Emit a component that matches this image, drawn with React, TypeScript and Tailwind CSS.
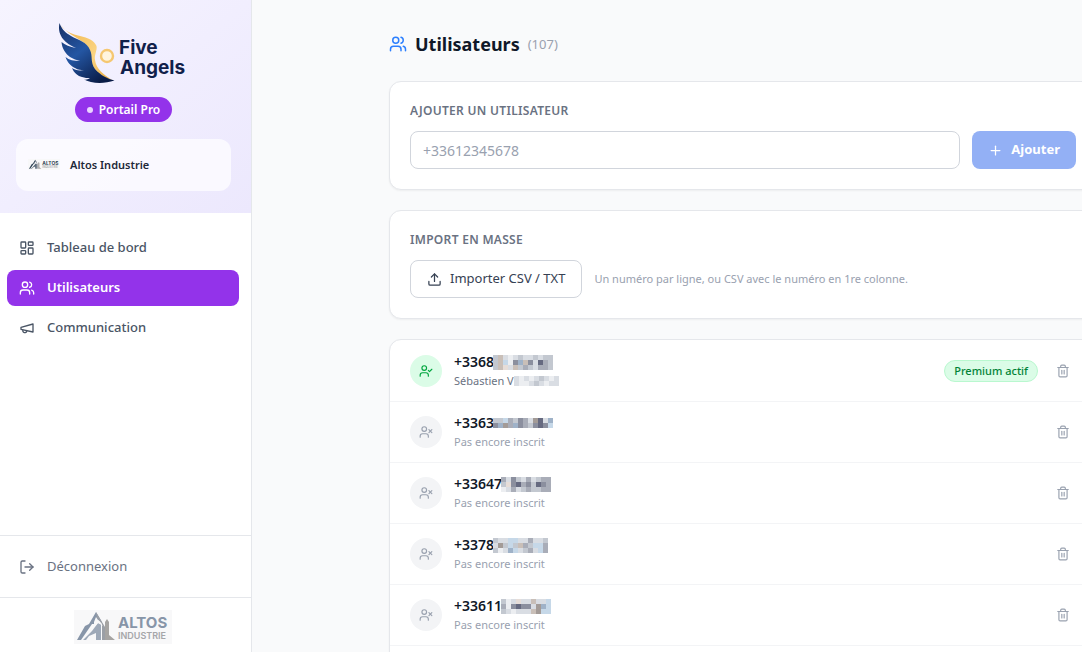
import { useState } from "react";
import { LayoutDashboard, LogOut, Plus, Trash2, Upload, UserCheck, Users, UserX } from "lucide-react";
import { clsx } from "clsx";

type Member = {
    phone: string;
    phoneMask: string[];
    name?: string;
    nameMask?: string[];
};

// each letter of a mask is one 5px tile, "." is left empty
const tiles: Record<string, string> = {
    a: "#eceef1",
    b: "#d9dde3",
    c: "#c3c8d0",
    d: "#a9adb8",
    e: "#8b8f9e",
    f: "#666a80",
    g: "#c9bfb8",
    h: "#a39b97",
    i: "#c6d8e8",
    j: "#9fb2c8",
    k: "#e6ddd8",
};

const members: Member[] = [
    {
        phone: "+3368",
        phoneMask: ["cgbabcbbcbcc", "cgiaejgebfdc", "cgkbgcdcbddc"],
        name: "Sébastien V",
        nameMask: ["bababcbab", "baabcbabb"],
    },
    { phone: "+3363", phoneMask: ["ccidcedbhfbj", "ejhdjedcefei"] },
    { phone: "+33647", phoneMask: ["dbecbdbcdd", "ckefdecfed", "abdbcdccdd"] },
    { phone: "+3378", phoneMask: ["cbbiibbdbbc", "bhcicgdciid", "cabjibcdbid"] },
    { phone: "+33611", phoneMask: ["cabkbbgbbi", "daefeebhji", "cbabbbghii"] },
];

const navItems = [
    { id: "dashboard", label: "Tableau de bord", icon: LayoutDashboard },
    { id: "users", label: "Utilisateurs", icon: Users },
    { id: "communication", label: "Communication", icon: Megaphone },
];

function Megaphone({ size = 24 }: { size?: number | string }) {
    return (
        <svg width={size} height={size} viewBox="0 0 24 24" fill="none" stroke="currentColor" strokeWidth="2" strokeLinecap="round" strokeLinejoin="round">
            <path d="m3 11 18-5v12L3 14v-3z" />
            <path d="M11.6 16.8a3 3 0 1 1-5.8-1.6" />
        </svg>
    );
}

function Mask({ rows, className }: { rows: string[]; className?: string }) {
    const w = rows[0].length * 5;
    const h = rows.length * 5;
    return (
        <svg width={w} height={h} viewBox={`0 0 ${w} ${h}`} shapeRendering="crispEdges" className={clsx("shrink-0", className)} aria-hidden="true">
            {rows.map((row, y) =>
                row.split("").map((t, x) => tiles[t] && <rect key={`${x}-${y}`} x={x * 5} y={y * 5} width="5" height="5" fill={tiles[t]} />)
            )}
        </svg>
    );
}

function BrandLogo() {
    return (
        <svg width="132" height="62" viewBox="0 0 132 62" role="img" aria-label="Five Angels">
            <defs>
                <linearGradient id="wing" x1="0" y1="0" x2="0.7" y2="1">
                    <stop offset="0" stopColor="#152f66" />
                    <stop offset="0.5" stopColor="#2456a3" />
                    <stop offset="1" stopColor="#0a1c47" />
                </linearGradient>
                <linearGradient id="gold" x1="0" y1="0" x2="1" y2="1">
                    <stop offset="0" stopColor="#efb548" />
                    <stop offset="0.6" stopColor="#fbd483" />
                    <stop offset="1" stopColor="#e5a63a" />
                </linearGradient>
            </defs>
            <path d="M2.5 3C8 10 14 12 22 14C30 16 36 18 38.5 24C39.5 28 36 33 37 38C38 47 46 53 54 58C45 56 36 49 33 40C31 33 33 30 30 25C26 18 14 16 2.5 3Z" fill="url(#gold)" />
            <path
                d="M1.5 1C0 8 2 13 5 17C8 21 13 24 18 26C12 25 7 23 3.5 20C4 27 8 32 12 35C15 37 19 38 22 39C16 39 11 38 7.5 35C9 40 13 44 17 46C20 48 23 48 26 48C21 49 17 48 14 46C16 51 20 54 24 55C27 56 29 56 32 56C29 58 27 58 25 57C34 62 46 62 56.5 58.5C50 57 42 53 37 47C32 40 35 34 32 28C29 20 20 18 13 14C8 11 4 8 1.5 1Z"
                fill="url(#wing)"
            />
            <circle cx="49" cy="34" r="6" fill="#fff5df" stroke="#f5c771" strokeWidth="2.4" />
            <g fill="#10204a" fontFamily="Inter, sans-serif" fontWeight="700" fontSize="19">
                <text x="61" y="32">Five</text>
                <text x="62" y="52">Angels</text>
            </g>
        </svg>
    );
}

function AltosMark({ className }: { className?: string }) {
    return (
        <svg viewBox="0 0 98 34" className={className} role="img" aria-label="Altos Industrie">
            <rect width="98" height="34" fill="#f8f8f9" />
            <path d="M3 30L11 16L15 14L22 2L28 12L24 10L21 14L18 14L7 30Z" fill="currentColor" />
            <path d="M9 30L18 21L24 13L27 14V30H22V23L15 26L12 30Z" fill="currentColor" opacity="0.8" />
            <path d="M22 2L31 17V30H28V14L23 8Z" fill="#9b9fa6" />
            <path d="M33 9L35 12V25L41 30H31V12Z" fill="#a6a4a2" />
            <path d="M20 12L22 7L24 10L29 16L24 13L20 17Z" fill="#f8f8f9" />
            <g fontFamily="Inter, sans-serif">
                <text x="44" y="18" fontSize="15" fontWeight="700" fill="currentColor">ALTOS</text>
                <text x="44" y="29" fontSize="9" fontWeight="600" fill="#a5a6a9">INDUSTRIE</text>
            </g>
        </svg>
    );
}

function Sidebar() {
    const [active, setActive] = useState("users");

    return (
        <aside className="flex w-[252px] shrink-0 flex-col border-r border-gray-200 bg-white">
            <div className="flex flex-col items-center bg-linear-to-br from-[#f6f4ff] to-[#ece8fd] pt-[22px] pr-5 pb-[22px] pl-4">
                <BrandLogo />
                <span className="mt-[13px] flex h-[25px] items-center gap-1.5 rounded-full bg-[#9333ea] px-3 text-xs font-semibold text-white">
                    <span className="size-1.5 rounded-full bg-purple-200" />
                    Portail Pro
                </span>
                <div className="mt-[17px] flex h-[52px] w-full items-center gap-2.5 rounded-xl bg-white/70 px-3">
                    <AltosMark className="w-8 text-[#2f4455]" />
                    <span className="text-[11px] font-semibold text-gray-800">Altos Industrie</span>
                </div>
            </div>

            <nav className="flex flex-1 flex-col gap-1 pt-[17px] pr-3 pl-[7px]">
                {navItems.map((item) => (
                    <button
                        key={item.id}
                        onClick={() => setActive(item.id)}
                        className={clsx(
                            "flex h-9 items-center gap-3 rounded-lg px-3 text-[13px]",
                            active === item.id ? "bg-[#9333ea] font-semibold text-white" : "font-medium text-gray-600"
                        )}
                    >
                        <item.icon size={16} />
                        {item.label}
                    </button>
                ))}
            </nav>

            <div className="border-t border-gray-200 py-3 pr-3 pl-[7px]">
                <button className="flex h-[37px] items-center gap-3 px-3 text-[13px] text-gray-500">
                    <LogOut size={16} />
                    Déconnexion
                </button>
            </div>
            <div className="flex h-[55px] justify-center border-t border-gray-200 pt-3 pr-1.5">
                <AltosMark className="h-[34px] text-[#8795a8]" />
            </div>
        </aside>
    );
}

function MemberRow({ member }: { member: Member }) {
    const registered = Boolean(member.name);

    return (
        <li className="flex h-[61px] items-center gap-3 border-b border-gray-100 px-5">
            <span
                className={clsx(
                    "flex size-8 shrink-0 items-center justify-center rounded-full",
                    registered ? "bg-green-100 text-green-600" : "bg-gray-100 text-gray-400"
                )}
            >
                {registered ? <UserCheck size={14} /> : <UserX size={14} />}
            </span>
            <div className="flex-1">
                <p className="flex items-center text-sm leading-5 font-semibold text-gray-900">
                    {member.phone}
                    <Mask rows={member.phoneMask} className="-ml-px" />
                </p>
                <p className={clsx("flex items-center text-[11px] leading-[18px]", registered ? "text-gray-500" : "text-gray-400")}>
                    {member.name ?? "Pas encore inscrit"}
                    {member.nameMask && <Mask rows={member.nameMask} />}
                </p>
            </div>
            {registered && (
                <span className="rounded-full border border-green-200 bg-green-100 px-[9px] text-[11px] leading-5 font-medium text-green-700">
                    Premium actif
                </span>
            )}
            <button aria-label="Supprimer" className="p-1.5 text-gray-400">
                <Trash2 size={14} />
            </button>
        </li>
    );
}

export default function App() {
    const [phone, setPhone] = useState("");

    return (
        <div className="flex h-screen overflow-hidden bg-gray-50 font-['Noto_Sans',sans-serif]">
            <Sidebar />
            <main className="min-w-0 flex-1 overflow-hidden">
                <div className="-mr-[15px] ml-[137px] pt-7">
                    <h1 className="mb-[21px] flex items-center gap-2 text-lg leading-8 font-bold text-gray-900">
                        <Users size={18} className="text-blue-500" />
                        Utilisateurs
                        <span className="text-[13px] font-normal text-gray-400">(107)</span>
                    </h1>

                    <div className="flex flex-col gap-5">
                        <section className="rounded-xl border border-gray-200 bg-white p-5 shadow-xs">
                            <label htmlFor="phone" className="mb-3 block text-xs leading-[17px] font-semibold tracking-wide text-gray-500 uppercase">
                                Ajouter un utilisateur
                            </label>
                            <div className="flex gap-3">
                                <input
                                    id="phone"
                                    type="tel"
                                    value={phone}
                                    onChange={(e) => setPhone(e.target.value)}
                                    placeholder="+33612345678"
                                    className="h-[38px] min-w-0 flex-1 rounded-lg border border-gray-300 px-3 text-sm placeholder:text-gray-400"
                                />
                                <button className="flex h-[38px] items-center gap-2 rounded-lg bg-[#93b0f5] px-4 text-[13px] font-bold text-white">
                                    <Plus size={15} />
                                    Ajouter
                                </button>
                            </div>
                        </section>

                        <section className="rounded-xl border border-gray-200 bg-white p-5 shadow-xs">
                            <h2 className="mb-3 text-xs leading-[17px] font-semibold tracking-wide text-gray-500 uppercase">Import en masse</h2>
                            <div className="flex items-center gap-3">
                                <button className="flex h-[38px] items-center gap-2 rounded-lg border border-gray-300 px-4 text-[13px] text-gray-700">
                                    <Upload size={15} />
                                    Importer CSV / TXT
                                </button>
                                <span className="text-[11px] text-gray-400">Un numéro par ligne, ou CSV avec le numéro en 1re colonne.</span>
                            </div>
                        </section>

                        <ul className="rounded-xl border border-gray-200 bg-white pt-px pb-5 shadow-xs">
                            {members.map((member) => (
                                <MemberRow key={member.phone} member={member} />
                            ))}
                        </ul>
                    </div>
                </div>
            </main>
        </div>
    );
}
